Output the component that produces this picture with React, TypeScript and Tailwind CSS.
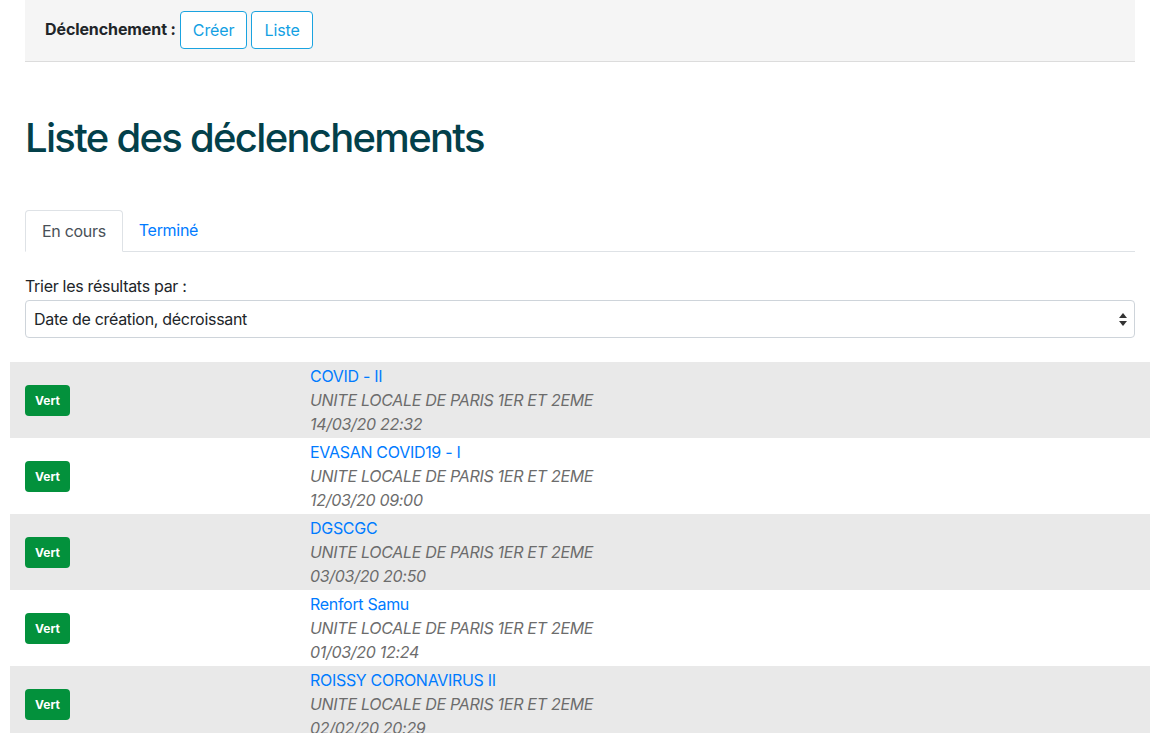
import React from 'react'

interface Trigger {
  title: string
  unit: string
  date: string
}

const triggers: Trigger[] = [
  { title: 'COVID - II', unit: 'UNITE LOCALE DE PARIS 1ER ET 2EME', date: '14/03/20 22:32' },
  { title: 'EVASAN COVID19 - I', unit: 'UNITE LOCALE DE PARIS 1ER ET 2EME', date: '12/03/20 09:00' },
  { title: 'DGSCGC', unit: 'UNITE LOCALE DE PARIS 1ER ET 2EME', date: '03/03/20 20:50' },
  { title: 'Renfort Samu', unit: 'UNITE LOCALE DE PARIS 1ER ET 2EME', date: '01/03/20 12:24' },
  { title: 'ROISSY CORONAVIRUS II', unit: 'UNITE LOCALE DE PARIS 1ER ET 2EME', date: '02/02/20 20:29' },
]

export default function App() {
  return (
    <div className="min-h-screen bg-white text-[#212529] font-['Inter','Liberation_Sans',sans-serif] text-[16px] leading-6 tracking-[-0.3px]">
      <div className="ml-[10px] w-[1140px]">
        <div className="px-[15px]">
          {/* top bar */}
          <div className="h-[62px] bg-[#f5f5f5] border-b border-[#dcdcdc] flex items-center pl-5 gap-1">
            <span className="font-bold text-[#212529] -mt-[4px] tracking-[-0.1px]">Déclenchement :</span>
            <div className="flex gap-1 -mt-[1px]">
              <button className="h-[38px] px-[12px] border border-[#1aa3e0] text-[#12a0e3] rounded-[4px] bg-white tracking-[-0.1px]">Créer</button>
              <button className="h-[38px] px-[12px] border border-[#1aa3e0] text-[#12a0e3] rounded-[4px] bg-white tracking-[-0.1px]">Liste</button>
            </div>
          </div>

          <h1 className="mt-[52px] text-[40px] leading-[48px] font-medium text-[#03404a] tracking-[-1.7px]">
            Liste des déclenchements
          </h1>

          {/* tabs */}
          <div className="mt-[48px] flex border-b border-[#dee2e6]">
            <div className="-mb-px px-4 py-2 border border-[#dee2e6] border-b-white rounded-t-[4px] bg-white text-[#495057]">
              En cours
            </div>
            <div className="px-4 py-2 text-[#007bff]">Terminé</div>
          </div>

          <div className="mt-[22px]">
            <div className="mb-[2px]">Trier les résultats par :</div>
            <div className="relative h-[38px] border border-[#ced4da] rounded-[4px] bg-white flex items-center pl-2">
              <span>Date de création, décroissant</span>
              <svg className="absolute right-[7px] top-[12px]" width="8" height="13" viewBox="0 0 8 13">
                <path d="M4 0 L8 5 L0 5 Z" fill="#333" />
                <path d="M4 13 L8 8 L0 8 Z" fill="#333" />
              </svg>
            </div>
          </div>
        </div>

        {/* list */}
        <div className="mt-[24px]">
          {triggers.map((t, i) => (
            <div key={i} className={`flex items-center h-[76px] ${i % 2 === 0 ? 'bg-[#e9e9e9]' : 'bg-white'}`}>
              <div className="w-[285px] px-[15px]">
                <span className="inline-block bg-[#03913c] text-white text-[12px] font-bold leading-[31px] px-[10px] rounded-[4px] tracking-normal">
                  Vert
                </span>
              </div>
              <div className="px-[15px] flex flex-col">
                <a className="text-[#007bff]">{t.title}</a>
                <span className="italic text-[#6c6c6c]">{t.unit}</span>
                <span className="italic text-[#6c6c6c]">{t.date}</span>
              </div>
            </div>
          ))}
        </div>
      </div>
    </div>
  )
}
